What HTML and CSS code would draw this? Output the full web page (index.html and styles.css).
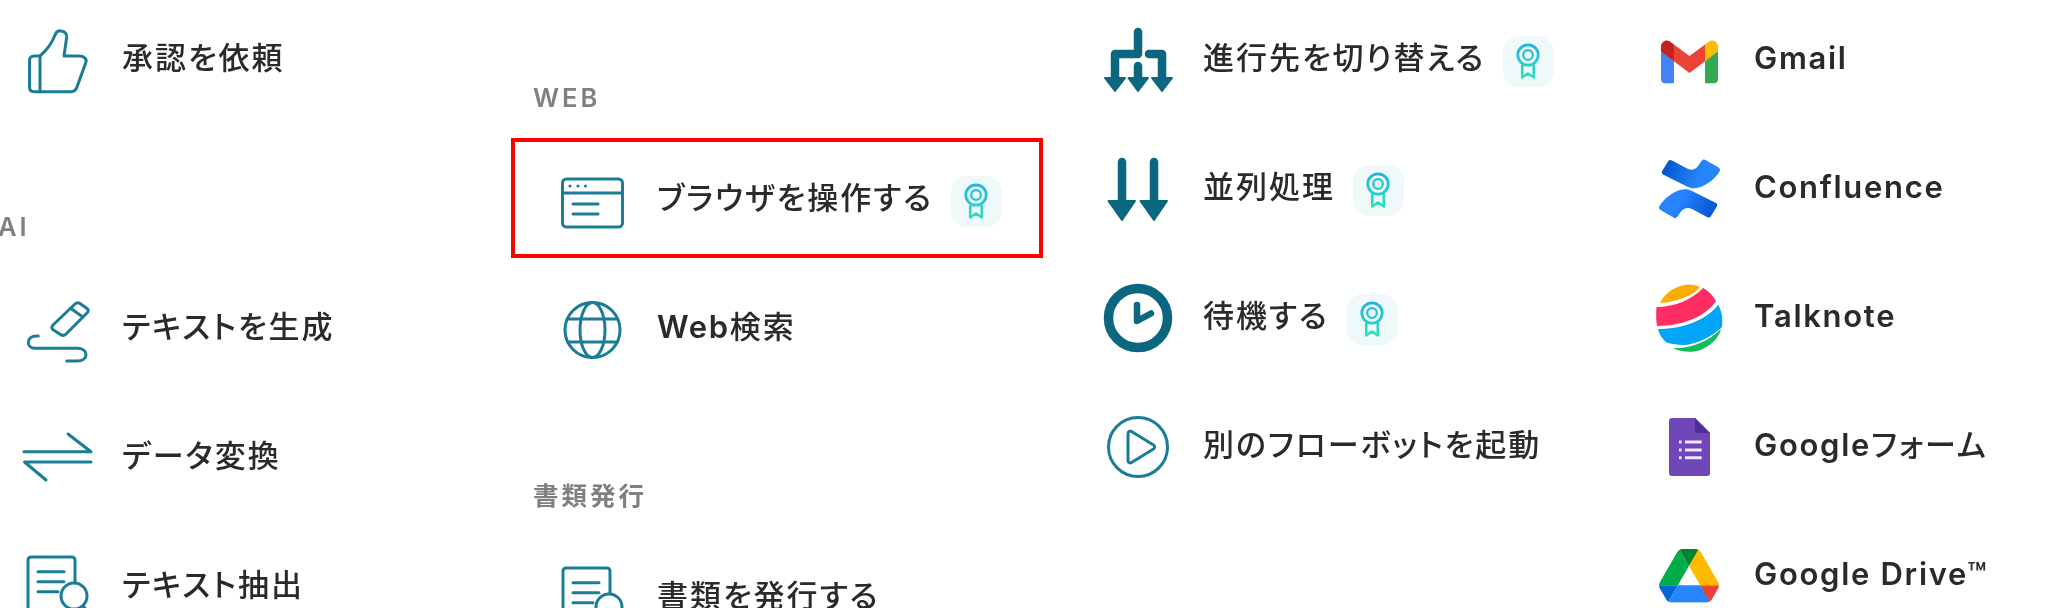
FILE: index.html
```html
<!DOCTYPE html>
<html lang="ja">
<head>
<meta charset="utf-8">
<title>アクション一覧</title>
<link rel="stylesheet" href="styles.css">
</head>
<body>
<svg class="sprite" aria-hidden="true">
  <defs>
    <linearGradient id="ribbonGrad" gradientUnits="userSpaceOnUse" x1="0" y1="7" x2="0" y2="42">
      <stop offset="0" stop-color="#1bb4e4"/>
      <stop offset="1" stop-color="#2ee0bd"/>
    </linearGradient>
    <linearGradient id="confGrad" gradientUnits="userSpaceOnUse" x1="14" y1="14" x2="62" y2="34">
      <stop offset="0" stop-color="#0052cc"/>
      <stop offset="0.75" stop-color="#2684ff"/>
    </linearGradient>
    <symbol id="ribbon" viewBox="0 0 51 51">
      <g fill="none" stroke="url(#ribbonGrad)" stroke-linejoin="round" stroke-linecap="round">
        <circle cx="25" cy="19" r="10.2" stroke-width="2.8"/>
        <circle cx="25" cy="19" r="4.8" stroke-width="2.2"/>
        <path d="M19.2 30V41.5L25 37.500L30.800 41.500V30" stroke-width="2.6"/>
      </g>
    </symbol>
    <symbol id="doc" viewBox="0 0 80 80">
      <path d="M58 36V14a3 3 0 0 0-3-3H14a3 3 0 0 0-3 3V67a3 3 0 0 0 3 3H46"/>
      <path d="M21 25.7H47M21 35.7H47M21 45.7H41"/>
      <circle cx="57" cy="50" r="13"/>
      <path d="M66 60L73 68"/>
    </symbol>
  </defs>
</svg>
<main class="board">
  <section class="col col-a">
    <ul class="list">
      <li class="item">
        <span class="icon"><svg viewBox="0 0 80 80" class="line"><path d="M23 37C30 31 35 24 38 16C39.5 12.5 42 11.5 44 12C48 12.5 50 15 49.7 18L47 37H62C67 37 70 40 69 43L60 68C59 71 57 72.7 54 72.7H23Z"/><path d="M23 37H17C14 37 12.5 39 12.5 41V68C12.5 71 14 72.7 17 72.7H23"/></svg></span>
        <span class="name">承認を依頼</span>
      </li>
    </ul>
    <h2 class="heading">AI</h2>
    <ul class="list">
      <li class="item">
        <span class="icon"><svg viewBox="0 0 80 80" class="line"><path d="M36 37L58 16Q60.500 13.700 63 15.500L70 20.500Q72.500 22.500 70 25L49 46Q46.500 48.500 43.500 46.500L36.500 42Q33.500 40 36 37Z"/><path d="M53.700 20.300L65.700 29"/><path d="M21.3 48H20C14 48 11.3 51 11.3 54.5C11.3 58 14 60.3 18 60.3H60C66 60.3 69 63 69 66.5C69 70 66 73 60 73H49.7"/></svg></span>
        <span class="name">テキストを生成</span>
      </li>
      <li class="item">
        <span class="icon"><svg viewBox="0 0 80 80" class="line"><path d="M7 34.7H74L51 17"/><path d="M74 45H7.500L29 63"/></svg></span>
        <span class="name">データ変換</span>
      </li>
      <li class="item">
        <span class="icon"><svg viewBox="0 0 80 80" class="line"><use href="#doc"/></svg></span>
        <span class="name">テキスト抽出</span>
      </li>
    </ul>
  </section>

  <section class="col col-b">
    <h2 class="heading">WEB</h2>
    <ul class="list">
      <li class="item item-marked">
        <span class="icon"><svg viewBox="0 0 80 80" class="line"><rect x="10.5" y="20" width="60" height="48" rx="4"/><path d="M10.5 34H70.5"/><path d="M21 45H46M21 55H46"/><circle class="dot" cx="18" cy="27" r="1.6"/><circle class="dot" cx="26" cy="27" r="1.6"/><circle class="dot" cx="33.500" cy="27" r="1.6"/></svg></span>
        <span class="name">ブラウザを操作する</span>
        <span class="badge"><svg viewBox="0 0 51 51"><use href="#ribbon"/></svg></span>
      </li>
      <li class="item">
        <span class="icon"><svg viewBox="0 0 80 80" class="line"><circle cx="40.500" cy="42" r="27.500"/><ellipse cx="40.500" cy="42" rx="12.500" ry="27.500"/><path d="M15.500 31H65.500M15.500 54H65.500"/></svg></span>
        <span class="name"><span class="latin">Web</span>検索</span>
      </li>
    </ul>
    <h2 class="heading">書類発行</h2>
    <ul class="list">
      <li class="item">
        <span class="icon"><svg viewBox="0 0 80 80" class="line"><use href="#doc"/></svg></span>
        <span class="name">書類を発行する</span>
      </li>
    </ul>
  </section>

  <section class="col col-c">
    <ul class="list">
      <li class="item">
        <span class="icon"><svg viewBox="0 0 80 80" class="solid-stroke"><path d="M40 13V35H17V62M51 35H64V62M40 47V62"/><path class="solid" d="M7 59H27L17 72ZM30.500 59H50L40 72ZM54 59H74L64 72Z"/></svg></span>
        <span class="name">進行先を切り替える</span>
        <span class="badge"><svg viewBox="0 0 51 51"><use href="#ribbon"/></svg></span>
      </li>
      <li class="item">
        <span class="icon"><svg viewBox="0 0 80 80" class="solid-stroke"><path d="M24 14V58M56 14V58"/><path class="solid" d="M10.500 53H37L24 72ZM42.500 53H69L56 72Z"/></svg></span>
        <span class="name">並列処理</span>
        <span class="badge"><svg viewBox="0 0 51 51"><use href="#ribbon"/></svg></span>
      </li>
      <li class="item">
        <span class="icon"><svg viewBox="0 0 80 80" class="solid-stroke"><circle cx="40" cy="41" r="29.500"/><path class="hand" d="M39 28V44L53 36.500"/></svg></span>
        <span class="name">待機する</span>
        <span class="badge"><svg viewBox="0 0 51 51"><use href="#ribbon"/></svg></span>
      </li>
      <li class="item">
        <span class="icon"><svg viewBox="0 0 80 80" class="line"><circle cx="40" cy="41" r="29.500"/><path d="M30 27.500C30 25.500 32 24.500 33.500 25.500L55.500 39C57 40 57 42 55.500 43L33.500 56.500C32 57.500 30 56.500 30 54.500Z"/></svg></span>
        <span class="name">別のフローボットを起動</span>
      </li>
    </ul>
  </section>

  <section class="col col-d">
    <ul class="list">
      <li class="item">
        <span class="icon"><svg viewBox="0 0 80 80"><svg x="12" y="21" width="57" height="44" viewBox="0 0 256 193"><path fill="#4285F4" d="M58.182 192.05V93.14L27.507 65.077 0 49.504v125.091c0 9.658 7.825 17.455 17.455 17.455h40.727Z"/><path fill="#34A853" d="M197.818 192.05h40.727c9.659 0 17.455-7.826 17.455-17.455V49.505l-31.156 17.837-27.026 25.798v98.91Z"/><path fill="#EA4335" d="m58.182 93.14-4.174-38.647 4.174-36.989L128 69.868l69.818-52.364 4.669 34.992-4.669 40.644L128 145.504z"/><path fill="#FBBC04" d="M197.818 17.504V93.14L256 49.504V26.231c0-21.585-24.64-33.89-41.89-20.945l-16.292 12.218Z"/><path fill="#C5221F" d="m0 49.504 26.759 20.07L58.182 93.14V17.504L41.89 5.286C24.61-7.66 0 4.646 0 26.23v23.273Z"/></svg></svg></span>
        <span class="name latin">Gmail</span>
      </li>
      <li class="item">
        <span class="icon"><svg viewBox="0 0 80 80"><path id="confBand" fill="url(#confGrad)" d="M19 13.500C20 12 21.500 11.500 23 12.500L38 20.500C42 22.500 46 22 49 18L52.500 13C53.500 11.500 55 11 56.500 12L69.500 19.500C71 20.500 71.500 22 70.500 23.500C66 31 58 37 50 39.500C46 40.700 42 40.500 38 38.500L14 26.500C12.500 25.500 12.500 24 13.500 22.500Z"/><use href="#confBand" transform="rotate(180 40.500 40.800)"/></svg></span>
        <span class="name latin">Confluence</span>
      </li>
      <li class="item">
        <span class="icon"><svg viewBox="0 0 80 80"><path fill="#fbad00" d="M11 26C16 15 28 8 40 7.500C44 7.500 48 8.500 51 10C44 19 28 25 11 26Z"/><path fill="#ff2d62" d="M7.500 30C26 30 44 22 54 11C60 14 64 19 67 24C58 38 36 49 8 49C7 43 7 36 7.500 30Z"/><path fill="#00a5f5" d="M9 52C36 52 58 42 69 28C73 34 74 42 73 50C62 61 46 67 36 68C28 68 22 67 17.500 65.500C13 62 10 57 9 52Z"/><path fill="#10bd60" d="M24 71C42 72 60 64 72 52C70 62 60 70 50 73.500C42 76 32 75 24 71Z"/></svg></span>
        <span class="name latin">Talknote</span>
      </li>
      <li class="item">
        <span class="icon"><svg viewBox="0 0 80 80"><path fill="#7047b8" d="M23 12H46L61 27V67a3 3 0 0 1-3 3H23a3 3 0 0 1-3-3V15a3 3 0 0 1 3-3Z"/><path fill="#4f2d93" d="M46 12L61 27H50a4 4 0 0 1-4-4Z"/><g class="form-lines"><path d="M36 36H52.700M36 44H52.700M36 51.700H52.700"/><path d="M30 36H32.500M30 44H32.500M30 51.700H32.500"/></g></svg></span>
        <span class="name"><span class="latin">Google</span>フォーム</span>
      </li>
      <li class="item">
        <span class="icon"><svg viewBox="0 0 80 80"><svg x="10" y="13.700" width="60" height="54" viewBox="0 0 87.3 78"><path d="m6.600 66.850 3.850 6.650c.8 1.400 1.950 2.500 3.300 3.300l13.750-23.800h-27.500c0 1.550.4 3.100 1.200 4.500z" fill="#0066da"/><path d="m43.650 25-13.750-23.800c-1.350.8-2.500 1.900-3.300 3.300l-25.400 44a9.060 9.060 0 0 0-1.200 4.500h27.500z" fill="#00ac47"/><path d="m73.550 76.800c1.350-.8 2.500-1.900 3.300-3.300l1.600-2.750 7.650-13.250c.8-1.400 1.200-2.950 1.200-4.500h-27.502l5.852 11.500z" fill="#ea4335"/><path d="m43.650 25 13.750-23.800c-1.350-.8-2.900-1.200-4.500-1.200h-18.500c-1.600 0-3.150.45-4.500 1.200z" fill="#00832d"/><path d="m59.800 53h-32.300l-13.750 23.800c1.350.8 2.900 1.200 4.500 1.200h50.800c1.600 0 3.150-.45 4.500-1.200z" fill="#2684fc"/><path d="m73.400 26.500-12.700-22c-.8-1.400-1.950-2.500-3.300-3.300l-13.750 23.800 16.150 28h27.450c0-1.550-.4-3.100-1.200-4.500z" fill="#ffba00"/></svg></svg></span>
        <span class="name latin">Google Drive™</span>
      </li>
    </ul>
  </section>
</main>
</body>
</html>
```
FILE: styles.css
```css
* { box-sizing: border-box; }
html, body { margin: 0; padding: 0; height: 100%; background: #fff; overflow: hidden; }
body { font-family: Inter, "Noto Sans CJK JP", "Liberation Sans", sans-serif; color: #2a2a2a; }
.sprite { position: absolute; width: 0; height: 0; }

.board {
  display: grid;
  grid-template-columns: 535px 546px 551px 1fr;
  margin: -6px 0 0 -2px;
  filter: blur(0.4px);
}
.col { min-width: 0; }
.list { list-style: none; margin: 0; padding: 0; }

.heading {
  height: 140px;
  margin: 0;
  padding-top: 89px;
  font-size: 25.5px;
  line-height: 30px;
  font-weight: 600;
  letter-spacing: 3px;
  color: #808080;
  font-feature-settings: "palt";
}

.item {
  position: relative;
  display: flex;
  align-items: center;
  height: 129px;
  padding-left: 19px;
  gap: 25px;
}
.item-marked::after {
  content: "";
  position: absolute;
  box-sizing: border-box;
  left: -22px;
  top: 4px;
  width: 532px;
  height: 120px;
  border: 4.5px solid #ff0000;
}

.icon { flex: none; width: 80px; height: 80px; }
.icon > svg { display: block; width: 80px; height: 80px; overflow: visible; }

.line { fill: none; stroke: #1a7c96; stroke-width: 3; stroke-linecap: round; stroke-linejoin: round; }
.line .dot { fill: #1a7c96; stroke: none; }
.solid-stroke { fill: none; stroke: #0b6780; stroke-width: 8.500; stroke-linecap: round; stroke-linejoin: round; }
.solid-stroke circle { stroke-width: 9.500; }
.solid-stroke .solid { fill: #0b6780; stroke-width: 2; }
.solid-stroke .hand { stroke-width: 6.500; }
.form-lines { fill: none; stroke: #ece6f7; stroke-width: 3; }

.name {
  margin-bottom: 2px;
  font-size: 31px;
  line-height: 40px;
  font-weight: 500;
  letter-spacing: 2px;
  white-space: nowrap;
  font-feature-settings: "palt";
}
.latin { font-weight: 600; letter-spacing: 1.7px; }

.badge {
  flex: none;
  width: 51px;
  height: 51px;
  margin: 6px 0 0 -7px;
  border-radius: 16px;
  background: #eff9fa;
}
.badge svg { display: block; width: 51px; height: 51px; }
```
